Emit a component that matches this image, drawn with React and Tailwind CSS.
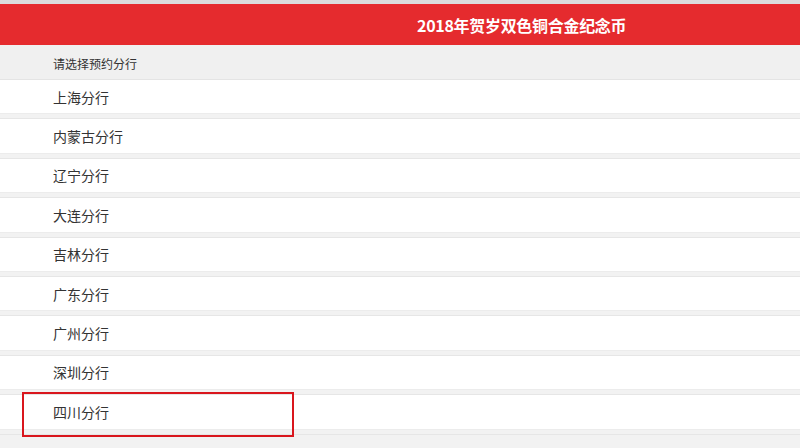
import React from "react";

const branches = [
  "上海分行",
  "内蒙古分行",
  "辽宁分行",
  "大连分行",
  "吉林分行",
  "广东分行",
  "广州分行",
  "深圳分行",
  "四川分行",
];

const App = () => {
  return (
    <div
      className="relative w-[800px] h-[448px] overflow-hidden bg-[#f2f2f2] text-[#333]"
      style={{ fontFamily: '"Noto Sans CJK SC", "Noto Sans", sans-serif' }}
    >
      {/* top strip */}
      <div className="h-[4px] bg-[#dcdcdc]" />

      {/* title bar */}
      <div className="h-[41px] bg-[#e52b2e] flex items-center pl-[417px]">
        <h1 className="text-[16px] font-bold text-white leading-none tracking-[-0.3px]">
          2018年贺岁双色铜合金纪念币
        </h1>
      </div>

      {/* list header */}
      <div className="h-[35px] bg-[#f0f0f0] flex items-center pl-[53px] pt-[4px] border-b border-[#e4e4e4]">
        <span className="text-[12px] leading-none">请选择预约分行</span>
      </div>

      {/* branch list */}
      <ul className="flex flex-col">
        {branches.map((name) => (
          <li key={name} className="h-[39.4px] bg-[#f2f2f2] flex flex-col">
            <div className="h-[34.4px] bg-white flex items-center pl-[53px] border-b border-[#ececec]">
              <span className="text-[14px] leading-none">{name}</span>
            </div>
            <div className="flex-1 border-b border-[#e6e6e6]" />
          </li>
        ))}
      </ul>

      {/* highlight box */}
      <div className="absolute left-[22px] top-[392px] w-[272px] h-[45px] border-2 border-[#d9161d]" />
    </div>
  );
};

export default App;
